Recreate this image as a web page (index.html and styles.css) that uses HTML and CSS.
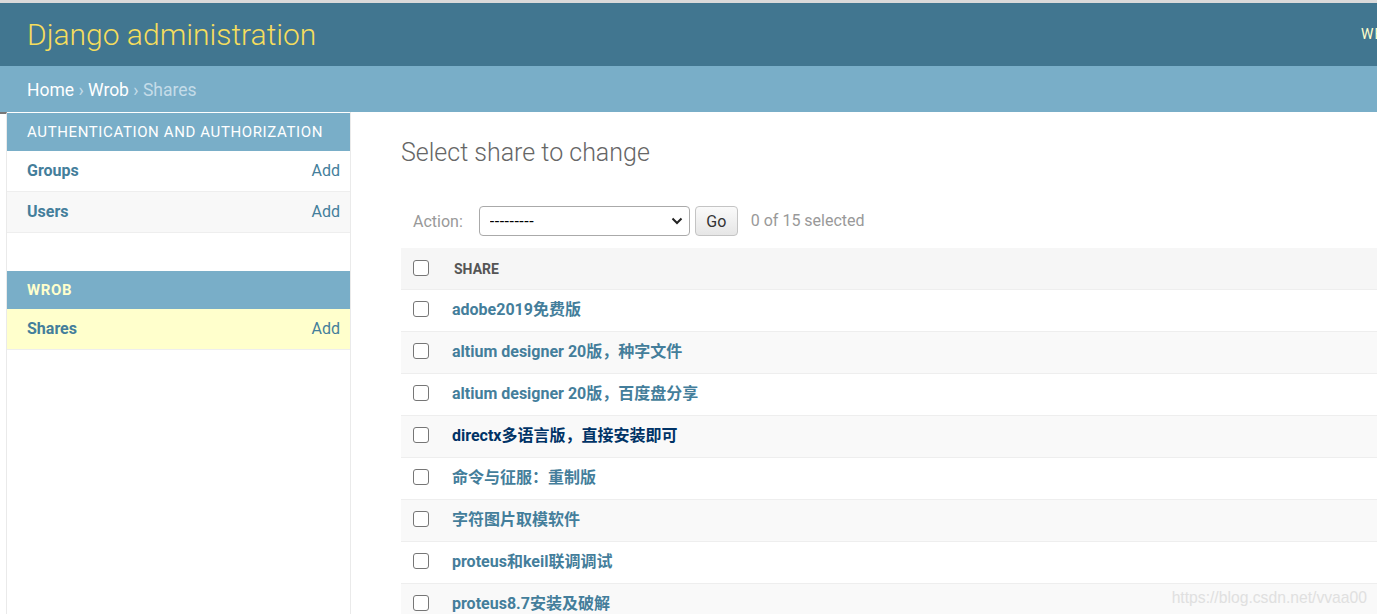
FILE: index.html
```html
<!DOCTYPE html>
<html lang="en">
<head>
  <meta charset="UTF-8">
  <meta name="viewport" content="width=device-width, initial-scale=1.0">
  <title>Select share to change | Django site admin</title>
  <link rel="stylesheet" href="styles.css">
</head>
<body>
  <div id="header">
    <div class="branding">
      <h1>Django administration</h1>
    </div>
    <div class="user-tools">Welcome, <strong>admin</strong>. View site / Change password / Log out</div>
  </div>

  <div class="breadcrumbs">
    <a href="#">Home</a> › <a href="#">Wrob</a> › Shares
  </div>

  <div class="main">
    <button class="toggle-nav-sidebar" aria-label="Toggle navigation"></button>

    <nav class="nav-sidebar">
      <div class="module">
        <div class="caption">Authentication and Authorization</div>
        <div class="model-row">
          <a class="model-name" href="#">Groups</a>
          <a class="addlink" href="#">Add</a>
        </div>
        <div class="model-row alt">
          <a class="model-name" href="#">Users</a>
          <a class="addlink" href="#">Add</a>
        </div>
      </div>

      <div class="module current-app">
        <div class="caption">Wrob</div>
        <div class="model-row current-model">
          <a class="model-name" href="#">Shares</a>
          <a class="addlink" href="#">Add</a>
        </div>
      </div>
    </nav>

    <div class="content">
      <h1>Select share to change</h1>

      <div class="actions">
        <label for="actionSelect">Action:</label>
        <span class="select-wrap">
          <select id="actionSelect">
            <option>---------</option>
            <option>Delete selected shares</option>
          </select>
          <svg class="chevron" width="12" height="8" viewBox="0 0 12 8"><path d="M1.5 1.5 L6 6 L10.5 1.5" fill="none" stroke="#222" stroke-width="2"/></svg>
        </span>
        <button class="go-btn">Go</button>
        <span class="action-counter">0 of 15 selected</span>
      </div>

      <table class="result-list">
        <thead>
          <tr>
            <th class="check-col"><input type="checkbox"></th>
            <th class="title-col">Share</th>
          </tr>
        </thead>
        <tbody>
          <tr><td class="check-col"><input type="checkbox"></td><td><a href="#">adobe2019免费版</a></td></tr>
          <tr><td class="check-col"><input type="checkbox"></td><td><a href="#">altium designer 20版，种字文件</a></td></tr>
          <tr><td class="check-col"><input type="checkbox"></td><td><a href="#">altium designer 20版，百度盘分享</a></td></tr>
          <tr><td class="check-col"><input type="checkbox"></td><td><a class="hover" href="#">directx多语言版，直接安装即可</a></td></tr>
          <tr><td class="check-col"><input type="checkbox"></td><td><a href="#">命令与征服：重制版</a></td></tr>
          <tr><td class="check-col"><input type="checkbox"></td><td><a href="#">字符图片取模软件</a></td></tr>
          <tr><td class="check-col"><input type="checkbox"></td><td><a href="#">proteus和keil联调调试</a></td></tr>
          <tr><td class="check-col"><input type="checkbox"></td><td><a href="#">proteus8.7安装及破解</a></td></tr>
          <tr><td class="check-col"><input type="checkbox"></td><td><a href="#">python3.8安装包</a></td></tr>
        </tbody>
      </table>
    </div>
  </div>

  <div class="watermark">https://blog.csdn.net/vvaa00</div>
</body>
</html>
```

FILE: styles.css
```css
body {
  margin: 0;
  height: 100vh;
  overflow: hidden;
  border-top: 3px solid #dadada;
  box-sizing: border-box;
  font-family: Roboto, "Noto Sans CJK SC", sans-serif;
  font-size: 16px;
  color: #333;
  background: #fff;
  position: relative;
}

a {
  text-decoration: none;
}

/* header */
#header {
  display: flex;
  align-items: center;
  height: 63px;
  padding-left: 27px;
  background: #417690;
  overflow: hidden;
  white-space: nowrap;
}

.branding {
  flex: 0 0 1334px;
}

.branding h1 {
  margin: 0;
  font-size: 30px;
  font-weight: 300;
  color: #f5dd5d;
}

.user-tools {
  flex-shrink: 0;
  font-size: 14px;
  letter-spacing: 1.2px;
  text-transform: uppercase;
  color: #ffc;
  margin-top: -2px;
}

.user-tools strong {
  font-weight: 700;
}

/* breadcrumbs */
.breadcrumbs {
  height: 46px;
  line-height: 48px;
  padding-left: 27px;
  background: #79aec8;
  color: #c4dce8;
  font-size: 17.5px;
}

.breadcrumbs a {
  color: #fff;
}

/* main area */
.main {
  display: flex;
  height: calc(100% - 109px);
}

.toggle-nav-sidebar {
  flex: 0 0 7px;
  padding: 0;
  border: 0;
  border-top: 2px solid #777;
  border-right: 1px solid #eaeaea;
  background: #fff;
  align-self: stretch;
}

.nav-sidebar {
  flex: 0 0 343px;
  border-right: 1px solid #eaeaea;
  padding-top: 1px;
}

.module {
  margin-bottom: 38px;
}

.caption {
  height: 38px;
  line-height: 38px;
  padding-left: 20px;
  background: #79aec8;
  color: #fff;
  font-size: 15px;
  letter-spacing: 0.62px;
  text-transform: uppercase;
}

.current-app .caption {
  color: #ffc;
  font-weight: 700;
}

.model-row {
  display: flex;
  justify-content: space-between;
  align-items: center;
  height: 40px;
  padding: 0 10px 0 20px;
  border-bottom: 1px solid #eee;
  background: #fff;
}

.model-row.alt {
  background: #f8f8f8;
}

.model-row.current-model {
  background: #ffc;
}

.model-name {
  color: #447e9b;
  font-weight: 700;
  margin-top: -1px;
}

.addlink {
  color: #447e9b;
  margin-top: -1px;
}

/* content */
.content {
  flex: 1;
  padding: 26px 0 0 50px;
  min-width: 0;
}

.content h1 {
  margin: 0 0 26px;
  font-size: 25px;
  line-height: 30px;
  font-weight: 300;
  color: #666;
}

.actions {
  display: flex;
  align-items: center;
  padding: 12px;
  color: #999;
}

.actions label {
  margin-right: 16px;
}

.select-wrap {
  position: relative;
  display: inline-block;
  margin-right: 5px;
}

.select-wrap select {
  appearance: none;
  -webkit-appearance: none;
  width: 211px;
  height: 30px;
  padding: 0 30px 0 10px;
  border: 1px solid #aaa;
  border-radius: 4px;
  background: #fff;
  color: #000;
  font-family: Roboto, sans-serif;
  font-size: 16px;
  letter-spacing: 0.5px;
}

.select-wrap .chevron {
  position: absolute;
  right: 7px;
  top: 11px;
  pointer-events: none;
}

.go-btn {
  width: 43px;
  height: 30px;
  border: 1px solid #c4c4c4;
  border-radius: 4px;
  background: linear-gradient(#fafafa, #e6e6e6);
  color: #333;
  font-family: Roboto, sans-serif;
  font-size: 16px;
  margin-right: 13px;
  padding: 0;
}

.action-counter {
  color: #999;
  margin-top: -1px;
}

/* result table */
.result-list {
  width: 100%;
  border-collapse: collapse;
}

.result-list th,
.result-list td {
  border-bottom: 1px solid #eee;
  text-align: left;
}

.result-list thead th {
  height: 41px;
  padding-top: 0;
  padding-bottom: 0;
  background: #f6f6f6;
  color: #555;
  font-size: 14px;
  font-weight: 700;
  text-transform: uppercase;
  vertical-align: middle;
}

.result-list thead th.check-col input {
  margin-top: -2px;
}

.result-list .title-col {
  padding-left: 14px;
}

.result-list td {
  padding: 9px 0 10px 12px;
  line-height: 22px;
  vertical-align: top;
}

.result-list tbody tr:nth-child(even) td {
  background: #f9f9f9;
}

.result-list .check-col {
  width: 16px;
  padding-left: 12px;
  padding-right: 11px;
}

.result-list td.check-col input {
  margin-top: 2px;
}

input[type="checkbox"] {
  appearance: none;
  -webkit-appearance: none;
  display: block;
  width: 16px;
  height: 16px;
  margin: 0;
  border: 1px solid #767676;
  border-radius: 3px;
  background: #fff;
}

.result-list td a {
  color: #447e9b;
  font-weight: 700;
}

.result-list td a.hover {
  color: #036;
}

.watermark {
  position: absolute;
  right: 10px;
  bottom: 7px;
  font-family: "Liberation Sans", Arial, sans-serif;
  font-size: 15.7px;
  color: #e0e0e0;
}
```
